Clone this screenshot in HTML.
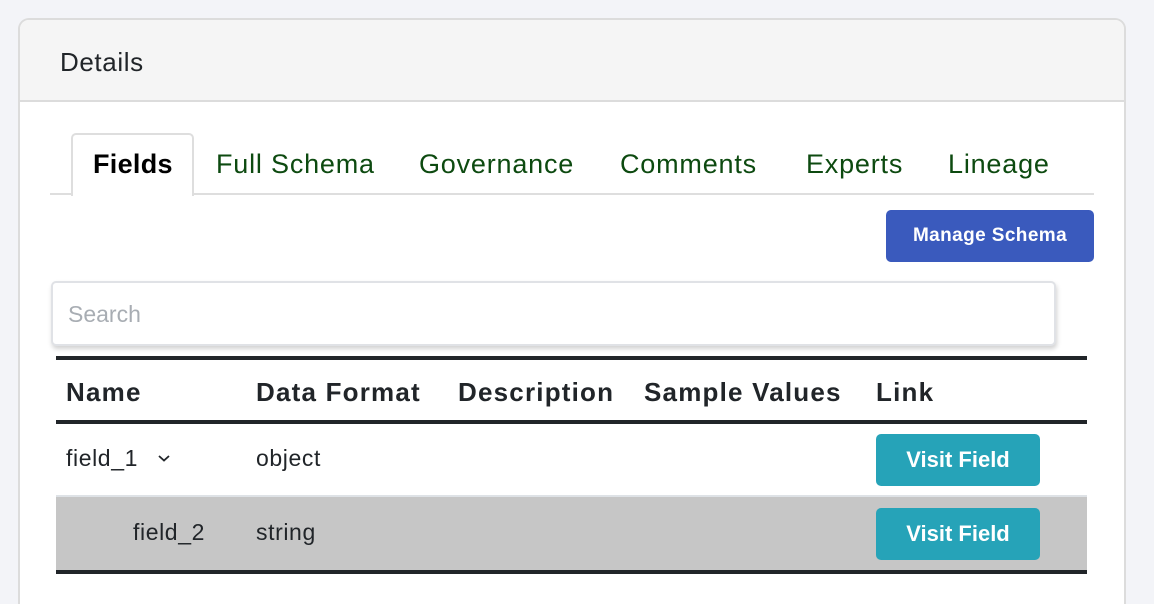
<!DOCTYPE html>
<html><head><style>
*{margin:0;padding:0;box-sizing:border-box}
html,body{width:1154px;height:604px;overflow:hidden}
body{background:#f3f4f8;font-family:"Liberation Sans",sans-serif;color:#212529}
#w{position:relative;width:1154px;height:604px;overflow:hidden}
.a{position:absolute;white-space:nowrap}
.card{left:18px;top:18px;width:1108px;height:586px;border:2px solid #dcdcdc;border-bottom:none;border-radius:11px 11px 0 0;background:#fff;overflow:hidden}
.hdr{left:0;top:0;width:100%;height:82px;background:#f5f5f5;border-bottom:2px solid #dcdcdc}
.tab{font-size:27px;color:#0d4a10;top:149px;letter-spacing:0.8px}
.btn{color:#fff;font-weight:bold;border-radius:5px;text-align:center}
.th{font-size:26px;font-weight:bold;top:377px;color:#212529;letter-spacing:1.2px}
.td{font-size:23px;color:#212529;letter-spacing:0.6px}
</style></head><body><div id="w">
<div class="a card"><div class="a hdr"></div></div>
<div class="a" style="left:60px;top:47px;font-size:26px;color:#212529;letter-spacing:0.6px">Details</div>
<div class="a" style="left:50px;top:193px;width:1044px;height:2px;background:#dedede"></div>
<div class="a" style="left:71px;top:133px;width:123px;height:63px;background:#fff;border:2px solid #dedede;border-bottom:none;border-radius:5px 5px 0 0"></div>
<div class="a tab" style="left:93px;color:#000;font-weight:bold;letter-spacing:0.3px">Fields</div>
<div class="a tab" style="left:216px">Full Schema</div>
<div class="a tab" style="left:419px">Governance</div>
<div class="a tab" style="left:620px">Comments</div>
<div class="a tab" style="left:806px">Experts</div>
<div class="a tab" style="left:948px">Lineage</div>
<div class="a btn" style="left:886px;top:210px;width:208px;height:52px;background:#3a5abd;font-size:19px;line-height:52px;letter-spacing:0.4px">Manage Schema</div>
<div class="a" style="left:51px;top:281px;width:1005px;height:65px;border:2px solid #e0e2e6;border-radius:5px;box-shadow:1px 3px 5px rgba(0,0,0,.18);background:#fff"></div>
<div class="a" style="left:68px;top:301px;font-size:23px;color:#a8adb3">Search</div>
<div class="a" style="left:56px;top:356px;width:1031px;height:4px;background:#212529"></div>
<div class="a th" style="left:66px">Name</div>
<div class="a th" style="left:256px">Data Format</div>
<div class="a th" style="left:458px">Description</div>
<div class="a th" style="left:644px">Sample Values</div>
<div class="a th" style="left:876px">Link</div>
<div class="a" style="left:56px;top:420px;width:1031px;height:4px;background:#212529"></div>
<div class="a" style="left:56px;top:495px;width:1031px;height:2px;background:#dee2e6"></div>
<div class="a" style="left:56px;top:497px;width:1031px;height:73px;background:#c6c6c6"></div>
<div class="a" style="left:56px;top:570px;width:1031px;height:4px;background:#212529"></div>
<div class="a td" style="left:66px;top:445px">field_1</div>
<svg class="a" style="left:157px;top:453px" width="14" height="10" viewBox="0 0 14 10"><path d="M2 3 L7 7.5 L12 3" fill="none" stroke="#212529" stroke-width="1.8"/></svg>
<div class="a td" style="left:256px;top:445px">object</div>
<div class="a td" style="left:133px;top:519px">field_2</div>
<div class="a td" style="left:256px;top:519px">string</div>
<div class="a btn" style="left:876px;top:434px;width:164px;height:52px;background:#26a3b8;font-size:22px;line-height:52px">Visit Field</div>
<div class="a btn" style="left:876px;top:508px;width:164px;height:52px;background:#26a3b8;font-size:22px;line-height:52px">Visit Field</div>
</div></body></html>
